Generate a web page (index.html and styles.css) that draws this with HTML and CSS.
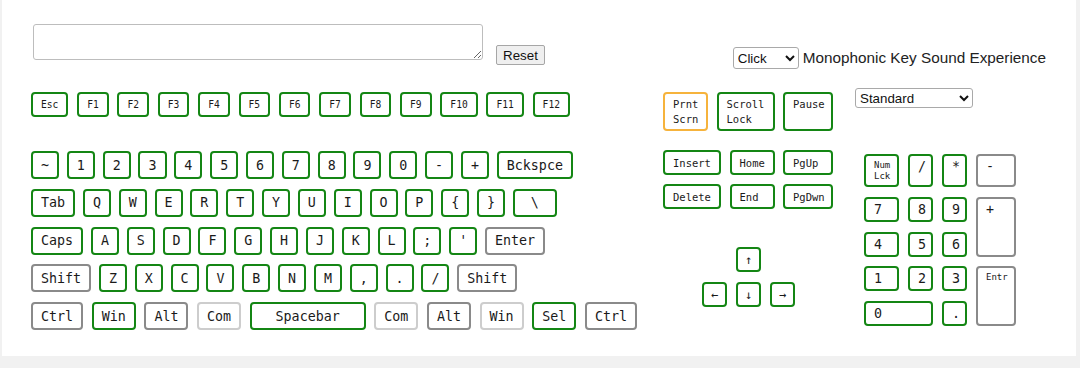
FILE: index.html
```html
<!DOCTYPE html>
<html lang="en">

<head>
    <meta charset="UTF-8">
    <title>Keyboard Sound Tester</title>
    <link rel="stylesheet" href="styles.css">
</head>

<body>
    <div class="page">
        <div class="top">
            <textarea class="typed"></textarea>
            <button class="reset">Reset</button>
            <div class="sound">
                <select class="sound-select">
                    <option>Click</option>
                </select>
                <span class="sound-label">Monophonic Key Sound Experience</span>
            </div>
        </div>

        <div class="board">
            <!-- main block -->
            <div class="main">
                <div class="fn-row">
                    <div class="key">Esc</div>
                    <div class="key">F1</div>
                    <div class="key">F2</div>
                    <div class="key">F3</div>
                    <div class="key">F4</div>
                    <div class="key">F5</div>
                    <div class="key">F6</div>
                    <div class="key">F7</div>
                    <div class="key">F8</div>
                    <div class="key">F9</div>
                    <div class="key">F10</div>
                    <div class="key">F11</div>
                    <div class="key">F12</div>
                </div>

                <div class="rows">
                    <div class="row">
                        <div class="key">~</div>
                        <div class="key">1</div>
                        <div class="key">2</div>
                        <div class="key">3</div>
                        <div class="key">4</div>
                        <div class="key">5</div>
                        <div class="key">6</div>
                        <div class="key">7</div>
                        <div class="key">8</div>
                        <div class="key">9</div>
                        <div class="key">0</div>
                        <div class="key">-</div>
                        <div class="key">+</div>
                        <div class="key">Bckspce</div>
                    </div>
                    <div class="row">
                        <div class="key">Tab</div>
                        <div class="key">Q</div>
                        <div class="key">W</div>
                        <div class="key">E</div>
                        <div class="key">R</div>
                        <div class="key">T</div>
                        <div class="key">Y</div>
                        <div class="key">U</div>
                        <div class="key">I</div>
                        <div class="key">O</div>
                        <div class="key">P</div>
                        <div class="key">{</div>
                        <div class="key">}</div>
                        <div class="key key-slash">\</div>
                    </div>
                    <div class="row">
                        <div class="key">Caps</div>
                        <div class="key">A</div>
                        <div class="key">S</div>
                        <div class="key">D</div>
                        <div class="key">F</div>
                        <div class="key">G</div>
                        <div class="key">H</div>
                        <div class="key">J</div>
                        <div class="key">K</div>
                        <div class="key">L</div>
                        <div class="key">;</div>
                        <div class="key">'</div>
                        <div class="key gray">Enter</div>
                    </div>
                    <div class="row">
                        <div class="key gray">Shift</div>
                        <div class="key">Z</div>
                        <div class="key">X</div>
                        <div class="key">C</div>
                        <div class="key">V</div>
                        <div class="key">B</div>
                        <div class="key">N</div>
                        <div class="key">M</div>
                        <div class="key">,</div>
                        <div class="key">.</div>
                        <div class="key">/</div>
                        <div class="key gray">Shift</div>
                    </div>
                    <div class="row row-bottom">
                        <div class="key gray">Ctrl</div>
                        <div class="key">Win</div>
                        <div class="key gray">Alt</div>
                        <div class="key light">Com</div>
                        <div class="key key-space">Spacebar</div>
                        <div class="key light">Com</div>
                        <div class="key gray">Alt</div>
                        <div class="key light">Win</div>
                        <div class="key">Sel</div>
                        <div class="key gray">Ctrl</div>
                    </div>
                </div>
            </div>

            <!-- navigation block -->
            <div class="nav">
                <div class="nav-top">
                    <div class="key orange w-45">Prnt<br>Scrn</div>
                    <div class="key w-58">Scroll<br>Lock</div>
                    <div class="key w-50">Pause</div>
                </div>
                <div class="nav-row">
                    <div class="key w-58">Insert</div>
                    <div class="key w-45">Home</div>
                    <div class="key w-50">PgUp</div>
                </div>
                <div class="nav-row">
                    <div class="key w-58">Delete</div>
                    <div class="key w-45">End</div>
                    <div class="key w-50">PgDwn</div>
                </div>
                <div class="arrows">
                    <div class="key arrow-up">↑</div>
                    <div class="key arrow-left">←</div>
                    <div class="key arrow-down">↓</div>
                    <div class="key arrow-right">→</div>
                </div>
            </div>

            <!-- numpad block -->
            <div class="side">
                <select class="layout-select">
                    <option>Standard</option>
                </select>
                <div class="numpad">
                    <div class="key small">Num<br>Lck</div>
                    <div class="key">/</div>
                    <div class="key">*</div>
                    <div class="key gray">-</div>
                    <div class="key">7</div>
                    <div class="key">8</div>
                    <div class="key">9</div>
                    <div class="key gray tall">+</div>
                    <div class="key">4</div>
                    <div class="key">5</div>
                    <div class="key">6</div>
                    <div class="key">1</div>
                    <div class="key">2</div>
                    <div class="key">3</div>
                    <div class="key gray tall small">Entr</div>
                    <div class="key wide">0</div>
                    <div class="key">.</div>
                </div>
            </div>
        </div>
    </div>
</body>

</html>
```

FILE: styles.css
```css
body {
    margin: 0;
    background-color: #f1f1f1;
    font-family: "Liberation Sans", Arial, sans-serif;
}

.page {
    margin-left: 2px;
    width: 1074px;
    height: 356px;
    box-sizing: border-box;
    padding: 24px 30px 0 29px;
    background-color: #fff;
}

/* header: text box, reset, sound picker */
.top {
    display: flex;
    align-items: flex-start;
    height: 45px;
}

.typed {
    box-sizing: border-box;
    width: 450px;
    height: 36px;
    margin: 0 0 0 2px;
    border: 1px solid #bdbdbd;
    border-radius: 3px;
}

.reset {
    box-sizing: border-box;
    width: 49px;
    height: 20px;
    margin: 21px 0 0 13px;
    padding: 0;
    border: 1px solid #a6a6a6;
    border-radius: 2px;
    background-color: #efefef;
    color: #111;
    font-family: "Liberation Sans", Arial, sans-serif;
    font-size: 13.33px;
}

.sound {
    display: flex;
    align-items: center;
    gap: 4px;
    margin: 23px 0 0 auto;
}

.sound-select,
.layout-select {
    box-sizing: border-box;
    border: 1px solid #a9a9a9;
    border-radius: 3px;
    background-color: #fff;
    color: #111;
    font-family: "Liberation Sans", Arial, sans-serif;
    font-size: 13.33px;
}

.sound-select {
    width: 66px;
    height: 22px;
}

.sound-label {
    font-size: 15.3px;
    color: #222;
    white-space: nowrap;
}

/* keyboard */
.board {
    display: flex;
    align-items: flex-start;
    margin-top: 19px;
}

.key {
    box-sizing: border-box;
    display: flex;
    align-items: center;
    justify-content: center;
    padding: 0 8px;
    border: 2px solid #148614;
    border-radius: 4px;
    background-color: #fff;
    color: #1a1a1a;
    font-family: "DejaVu Sans Mono", "Liberation Mono", monospace;
    white-space: nowrap;
}

.key.gray {
    border-color: #8a8a8a;
}

.key.light {
    border-color: #cdcdcd;
}

.key.orange {
    border-color: #f6b33c;
}

.main {
    width: 606px;
}

.fn-row {
    display: flex;
    gap: 8.8px;
    margin-top: 4px;
}

.fn-row .key {
    height: 25px;
    font-size: 9.6px;
}

.rows {
    display: flex;
    flex-direction: column;
    gap: 9.75px;
    margin-top: 34px;
}

.row {
    display: flex;
    gap: 7.8px;
}

.row-bottom {
    gap: 8.6px;
}

.row .key {
    height: 28px;
    font-size: 13.33px;
}

.row .key-slash {
    width: 44px;
}

.row .key-space {
    width: 116px;
}

/* navigation cluster */
.nav {
    width: 170px;
    margin-left: 26px;
}

.nav .key {
    justify-content: flex-start;
    font-size: 10.5px;
}

.nav-top,
.nav-row {
    display: flex;
    gap: 8.5px;
}

.nav-top {
    margin-top: 4px;
}

.nav-top .key {
    height: 39px;
    align-items: flex-start;
    padding-top: 2.5px;
    line-height: 15px;
}

.nav-row {
    margin-top: 9px;
}

.nav-top + .nav-row {
    margin-top: 19px;
}

.nav-row .key {
    height: 25px;
}

.w-45 {
    width: 45px;
}

.w-50 {
    width: 50px;
}

.w-58 {
    width: 58px;
}

.arrows {
    display: grid;
    grid-template-columns: repeat(3, 25px);
    grid-template-rows: 25px 25px;
    gap: 10px 9px;
    margin: 38px 0 0 39px;
}

.nav .arrows .key {
    justify-content: center;
    padding: 0;
    font-size: 12px;
}

.arrow-up {
    grid-area: 1 / 2;
}

.arrow-left {
    grid-area: 2 / 1;
}

.arrow-down {
    grid-area: 2 / 2;
}

.arrow-right {
    grid-area: 2 / 3;
}

/* numpad */
.side {
    margin-left: 22px;
}

.layout-select {
    display: block;
    width: 118px;
    height: 20px;
}

.numpad {
    display: grid;
    grid-template-columns: 35px 25px 25px 40px;
    grid-template-rows: 33px repeat(4, 25px);
    gap: 9.75px 9px;
    margin: 46px 0 0 9px;
}

.numpad .key {
    justify-content: flex-start;
    align-items: flex-start;
    padding: 3px 0 0 8px;
    font-size: 13.33px;
    line-height: 16px;
}

.numpad .key.small {
    padding-top: 4px;
    font-size: 9px;
    line-height: 11px;
}

.numpad .tall {
    grid-row: span 2;
}

.numpad .wide {
    grid-column: span 2;
}
```
